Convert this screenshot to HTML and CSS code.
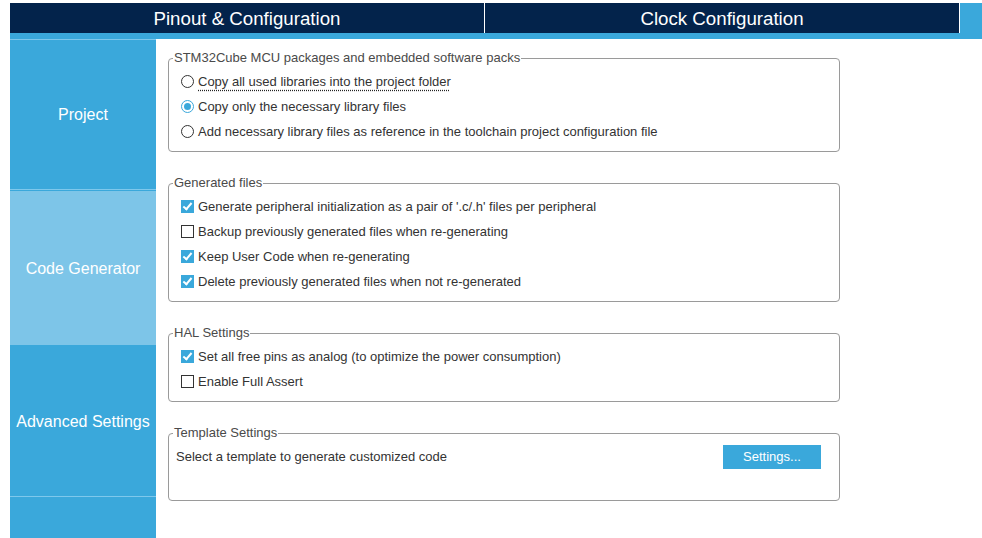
FILE: index.html
```html
<!DOCTYPE html>
<html lang="en">

<head>
    <meta charset="UTF-8">
    <title>Project Manager</title>
    <link rel="stylesheet" href="styles.css">
</head>

<body>
    <div class="app">
        <div class="tabs">
            <div class="tab">Pinout &amp; Configuration</div>
            <div class="tab">Clock Configuration</div>
        </div>
        <div class="strip"></div>

        <div class="main">
            <div class="sidebar">
                <div class="nav-item">Project</div>
                <div class="nav-item active">Code Generator</div>
                <div class="nav-item">Advanced Settings</div>
            </div>

            <div class="content">
                <fieldset class="group">
                    <legend>STM32Cube MCU packages and embedded software packs</legend>
                    <label class="row"><input type="radio" name="pack"><span class="focused">Copy all used libraries into the project folder</span></label>
                    <label class="row"><input type="radio" name="pack" checked><span>Copy only the necessary library files</span></label>
                    <label class="row"><input type="radio" name="pack"><span>Add necessary library files as reference in the toolchain project configuration file</span></label>
                </fieldset>

                <fieldset class="group">
                    <legend>Generated files</legend>
                    <label class="row"><input type="checkbox" checked><span>Generate peripheral initialization as a pair of '.c/.h' files per peripheral</span></label>
                    <label class="row"><input type="checkbox"><span>Backup previously generated files when re-generating</span></label>
                    <label class="row"><input type="checkbox" checked><span>Keep User Code when re-generating</span></label>
                    <label class="row"><input type="checkbox" checked><span>Delete previously generated files when not re-generated</span></label>
                </fieldset>

                <fieldset class="group">
                    <legend>HAL Settings</legend>
                    <label class="row"><input type="checkbox" checked><span>Set all free pins as analog (to optimize the power consumption)</span></label>
                    <label class="row"><input type="checkbox"><span>Enable Full Assert</span></label>
                </fieldset>

                <fieldset class="group template">
                    <legend>Template Settings</legend>
                    <div class="row">
                        <span class="template-text">Select a template to generate customized code</span>
                        <button class="settings-btn">Settings...</button>
                    </div>
                </fieldset>
            </div>
        </div>
    </div>
</body>

</html>
```

FILE: styles.css
```css
body {
    margin: 0;
    padding: 0;
    font-family: "Liberation Sans", Arial, sans-serif;
    background-color: #ffffff;
    overflow: hidden;
}

.app {
    margin: 3px 0 0 10px;
}

/* top tabs */
.tabs {
    display: flex;
    height: 30px;
    background-color: #3aa8db;
}

.tab {
    width: 474px;
    border-right: 1px solid #ffffff;
    background-color: #03234b;
    color: #ffffff;
    font-size: 18.7px;
    line-height: 31px;
    text-align: center;
}

.strip {
    height: 6px;
    background-color: #3aa8db;
}

.main {
    display: flex;
    height: calc(100vh - 39px);
}

/* left menu */
.sidebar {
    width: 146px;
    flex-shrink: 0;
    background-color: #3aa8db;
    border-top: 1px solid #7ec8ec;
}

.nav-item {
    height: 148px;
    padding-top: 1px;
    border-bottom: 1px solid #7ec8ec;
    margin-bottom: 1px;
    display: flex;
    align-items: center;
    justify-content: center;
    color: #ffffff;
    font-size: 16px;
}

.nav-item.active {
    height: 152px;
    padding-top: 2px;
    border-bottom: none;
    margin-bottom: 0;
    background-color: #7dc5e8;
}

.nav-item:last-child {
    height: 148px;
    padding-top: 3px;
}

/* right side */
.content {
    padding: 12px 0 0 12px;
}

.group {
    width: 646px;
    margin: 0 0 24px 0;
    padding: 4px 12px 7px 12px;
    border: 1px solid #9a9a9a;
    border-radius: 4px;
}

.group legend {
    margin-left: -8px;
    padding: 0 1px;
    font-size: 13px;
    line-height: 14px;
    color: #4a4a4a;
}

.row {
    display: flex;
    align-items: center;
    height: 25px;
    font-size: 13px;
    color: #333333;
}

.row input {
    appearance: none;
    -webkit-appearance: none;
    position: relative;
    width: 13px;
    height: 13px;
    margin: 0 4px 0 0;
    border: 1px solid #333333;
    background-color: #ffffff;
}

.row input[type=radio] {
    border-radius: 50%;
}

.row input[type=radio]:checked {
    border-color: #3aa8db;
}

.row input[type=radio]:checked::after {
    content: "";
    position: absolute;
    left: 2px;
    top: 2px;
    width: 7px;
    height: 7px;
    border-radius: 50%;
    background-color: #3aa8db;
}

.row input[type=checkbox]:checked {
    border-color: #3aa8db;
    background-color: #3aa8db;
}

.row input[type=checkbox]:checked::after {
    content: "";
    position: absolute;
    left: 3px;
    top: 0px;
    width: 3px;
    height: 7px;
    border-right: 2px solid #ffffff;
    border-bottom: 2px solid #ffffff;
    transform: rotate(40deg);
}

.focused {
    text-decoration: underline dotted #222222;
    text-underline-offset: 4px;
}

.template {
    padding-bottom: 31px;
}

.template .row {
    justify-content: space-between;
}

.template-text {
    margin-left: -5px;
}

.settings-btn {
    width: 98px;
    height: 24px;
    margin-right: 6px;
    border: none;
    background-color: #3aa8db;
    color: #ffffff;
    font-family: "Liberation Sans", Arial, sans-serif;
    font-size: 13px;
}
```
